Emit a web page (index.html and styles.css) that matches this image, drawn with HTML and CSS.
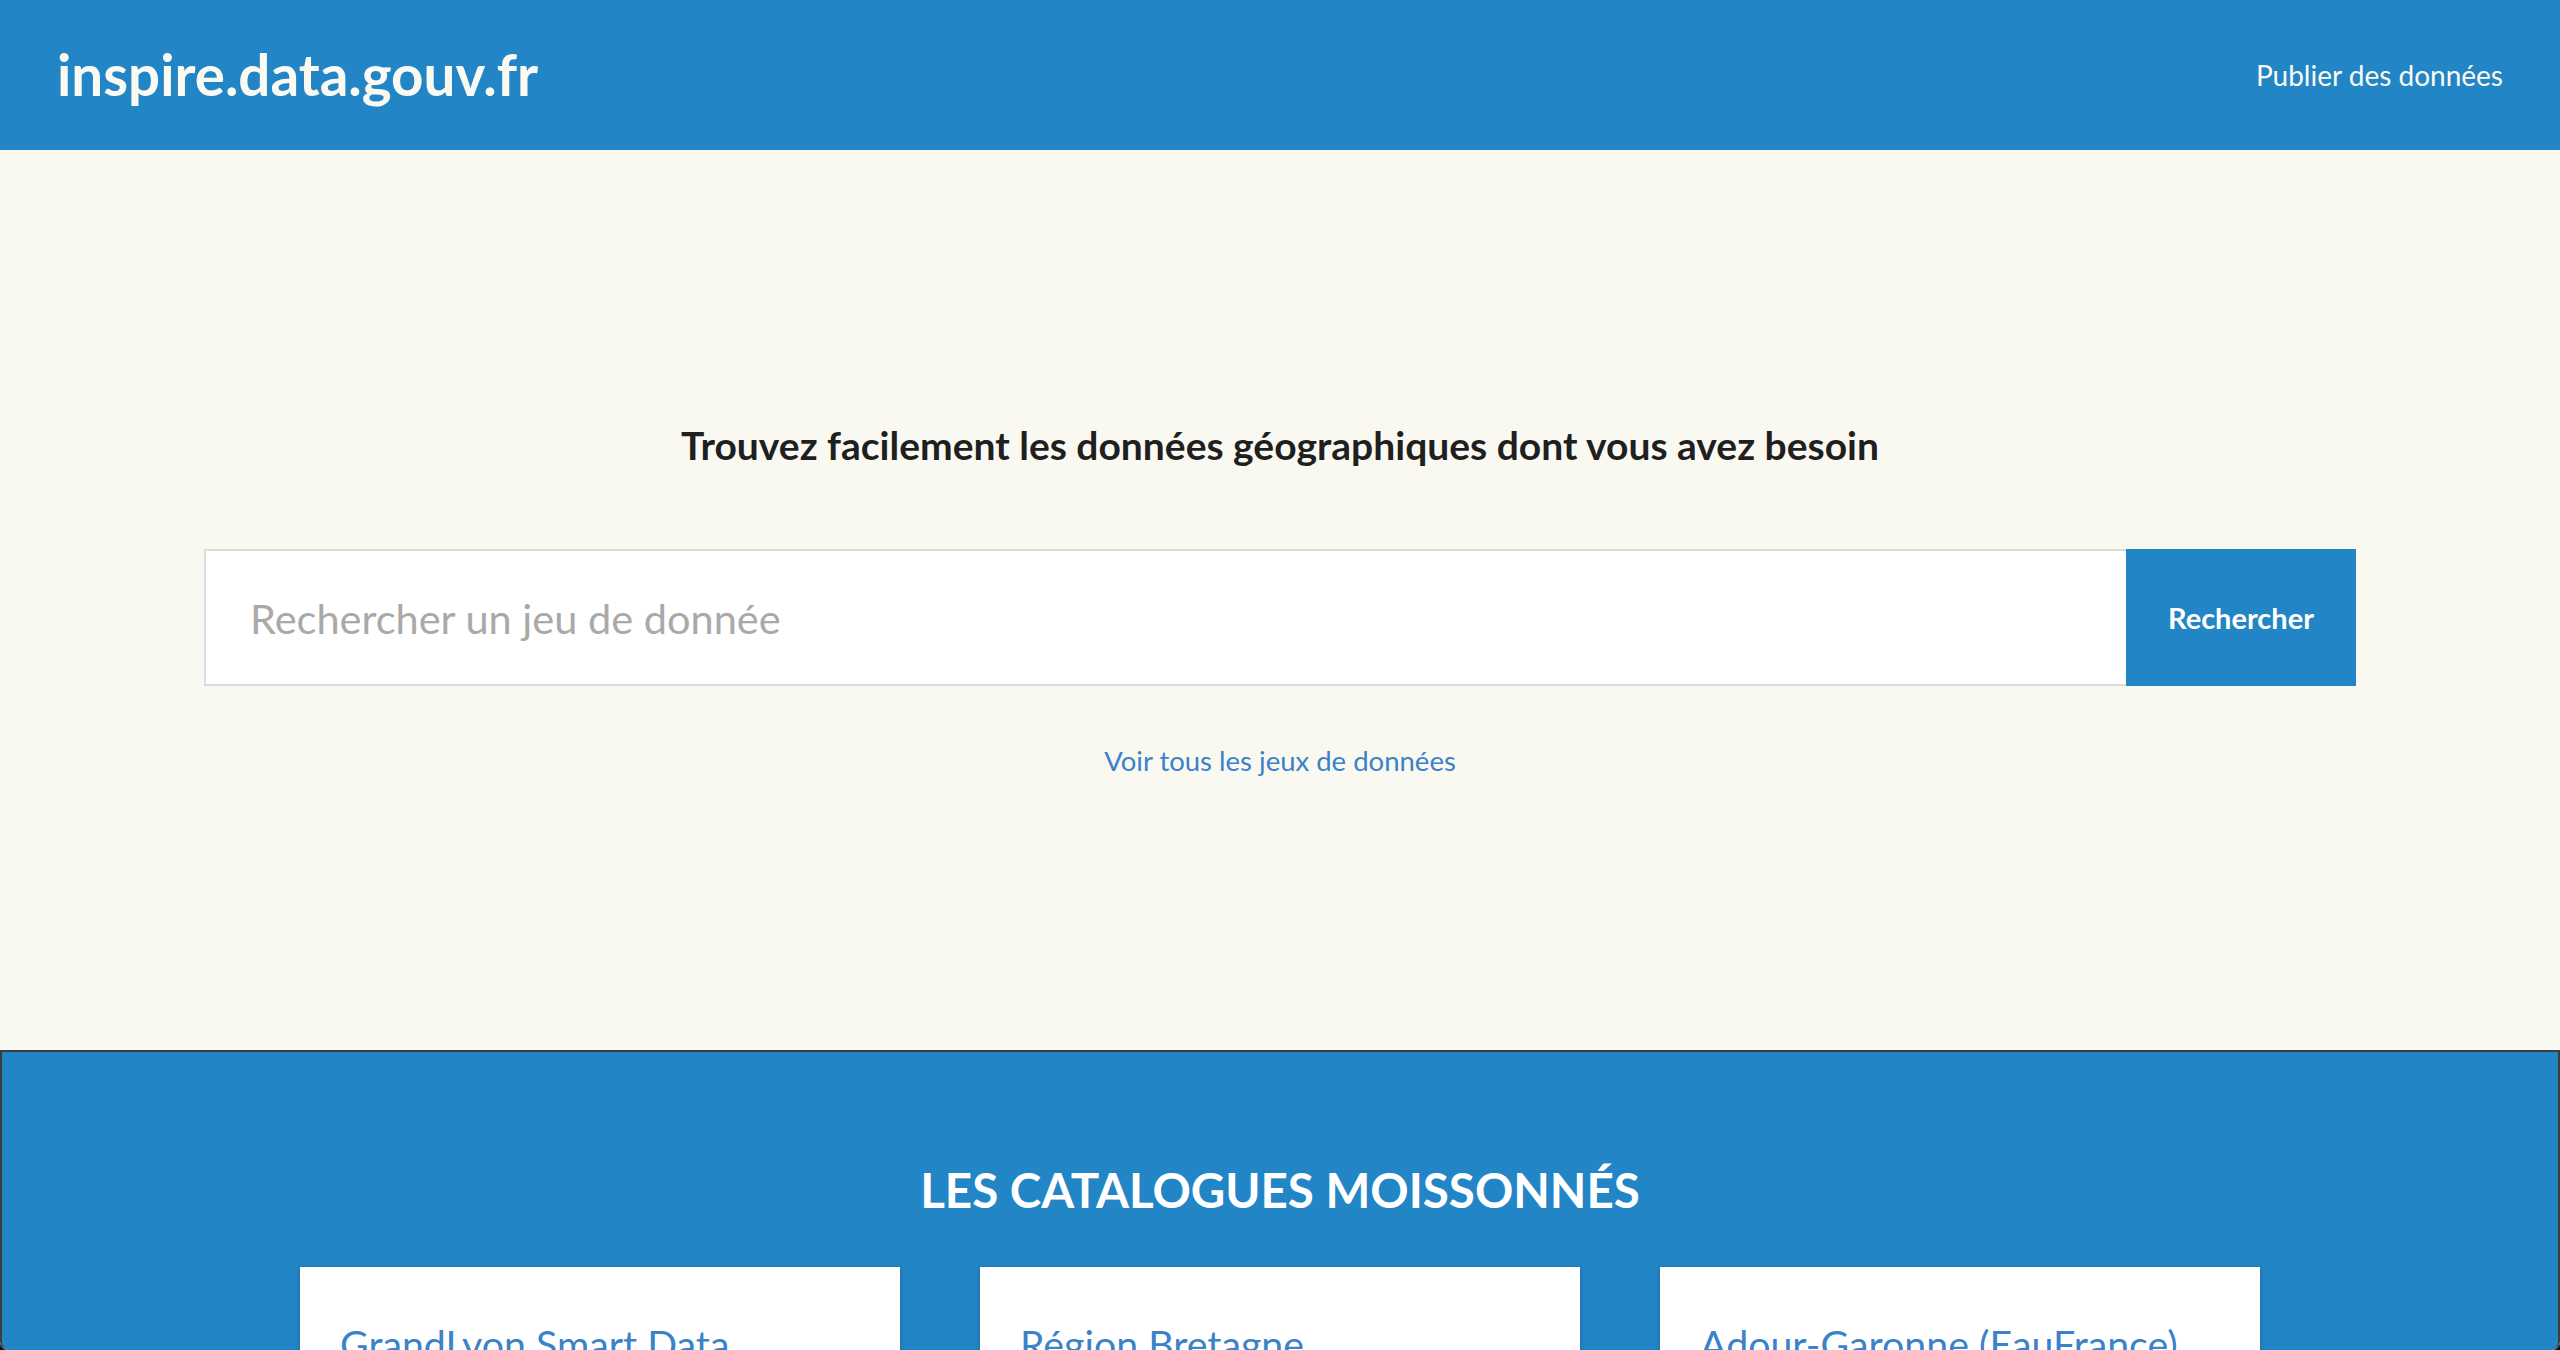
FILE: index.html
```html
<!DOCTYPE html>
<html lang="fr">
<head>
<meta charset="utf-8">
<title>inspire.data.gouv.fr</title>
<link rel="stylesheet" href="styles.css">
</head>
<body>
<div class="page">
  <header class="topbar">
    <a class="logo" href="#">inspire.data.gouv.fr</a>
    <a class="nav-link" href="#">Publier des données</a>
  </header>

  <section class="hero">
    <h1 class="hero-title">Trouvez facilement les données géographiques dont vous avez besoin</h1>
    <form class="search">
      <input class="search-input" type="text" placeholder="Rechercher un jeu de donnée">
      <button class="search-button" type="button">Rechercher</button>
    </form>
    <a class="all-link" href="#">Voir tous les jeux de données</a>
  </section>

  <section class="catalogues">
    <h2 class="catalogues-title">LES CATALOGUES MOISSONNÉS</h2>
    <div class="cards">
      <div class="card"><a class="card-title" href="#">GrandLyon Smart Data</a></div>
      <div class="card"><a class="card-title" href="#">Région Bretagne</a></div>
      <div class="card"><a class="card-title" href="#">Adour-Garonne (EauFrance)</a></div>
    </div>
  </section>
</div>
</body>
</html>
```

FILE: styles.css
```css
* { box-sizing: border-box; }

html, body {
  margin: 0;
  padding: 0;
  background: #111;
  font-family: Lato, "Open Sans", sans-serif;
}

.page {
  height: 100vh;
  display: flex;
  flex-direction: column;
  overflow: hidden;
  border-radius: 0 0 8px 8px;
  background: #f9f9f2;
}

.topbar {
  height: 150px;
  flex: none;
  background: #2285c6;
  display: flex;
  align-items: center;
  justify-content: space-between;
  padding: 0 57px 0 57px;
}

.logo {
  color: #fafaf3;
  font-weight: 700;
  font-size: 56.5px;
  text-decoration: none;
  line-height: 1;
  margin-top: -1px;
}

.nav-link {
  color: #fafaf3;
  font-size: 28px;
  text-decoration: none;
  margin-top: -1px;
}

.hero {
  height: 900px;
  flex: none;
  background: #f9f9f2;
  display: flex;
  flex-direction: column;
  align-items: center;
  padding-top: 272px;
}

.hero-title {
  margin: 0;
  font-size: 39px;
  line-height: 47px;
  font-weight: 700;
  color: #1f1f1f;
}

.search {
  margin-top: 80px;
  width: 2152px;
  height: 137px;
  display: flex;
}

.search-input {
  flex: 1;
  height: 100%;
  border: 2px solid #dcdcdc;
  border-right: none;
  background: #fff;
  padding: 0 44px;
  font-family: Lato, sans-serif;
  font-size: 41.5px;
  color: #333;
  outline: none;
}

.search-input::placeholder {
  color: #a9a9a9;
}

.search-button {
  width: 230px;
  height: 100%;
  border: none;
  background: #2285c6;
  color: #fff;
  font-family: Lato, sans-serif;
  font-weight: 700;
  font-size: 29px;
  padding: 0;
}

.all-link {
  margin-top: 59px;
  color: #3b82c8;
  font-size: 27.5px;
  line-height: 32px;
  text-decoration: none;
}

.catalogues {
  flex: 1;
  background: #2285c6;
  border: 2px solid #3a3e42;
  border-bottom: none;
  border-radius: 0 0 8px 8px;
  display: flex;
  flex-direction: column;
  align-items: center;
  padding-top: 108px;
  overflow: hidden;
}

.catalogues-title {
  margin: 0;
  color: #fff;
  font-size: 47.5px;
  line-height: 59px;
  font-weight: 700;
}

.cards {
  margin-top: 48px;
  display: flex;
  gap: 80px;
}

.card {
  width: 600px;
  height: 320px;
  background: #fff;
  box-shadow: 0 1px 4px rgba(0, 0, 0, 0.25);
  padding: 53px 40px;
}

.card-title {
  color: #3b82c8;
  font-size: 39.3px;
  line-height: 47px;
  text-decoration: none;
}
```
